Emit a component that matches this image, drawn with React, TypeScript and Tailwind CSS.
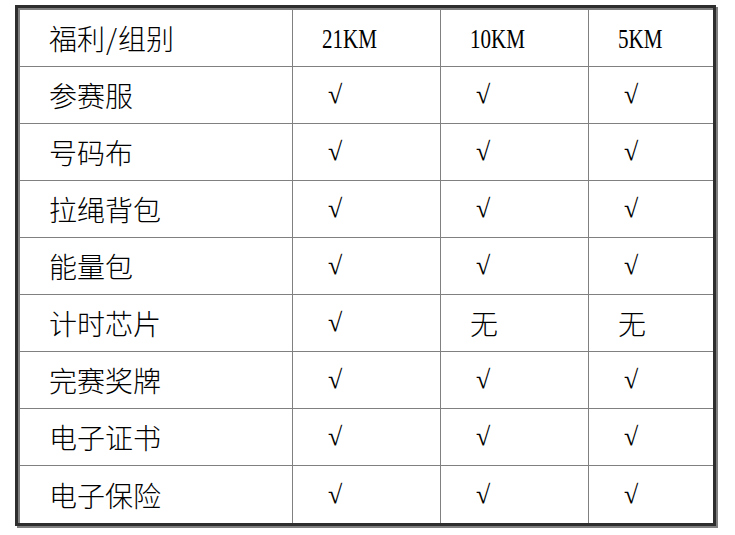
import React from "react";

const rows: [string, string, string, string][] = [
  ["参赛服", "√", "√", "√"],
  ["号码布", "√", "√", "√"],
  ["拉绳背包", "√", "√", "√"],
  ["能量包", "√", "√", "√"],
  ["计时芯片", "√", "无", "无"],
  ["完赛奖牌", "√", "√", "√"],
  ["电子证书", "√", "√", "√"],
  ["电子保险", "√", "√", "√"],
];

const cjk = { fontFamily: '"Noto Sans CJK SC", sans-serif' };
const latin = { fontFamily: '"Liberation Serif", "Noto Sans CJK SC", serif' };

function Cell({ value, last }: { value: string; last?: boolean }) {
  const border = last ? "" : "border-r border-[#808080]";
  if (value === "√") {
    return (
      <div className={`flex items-center pl-[35px] ${border}`}>
        <span className="text-[26px] leading-none text-black" style={latin}>
          √
        </span>
      </div>
    );
  }
  if (value === "福利/组别") {
    return (
      <div className={`flex items-center pl-[29px] ${border}`}>
        <span className="text-[28px] font-light leading-none text-black" style={cjk}>
          福利
        </span>
        <span className="px-[1px] text-[28px] font-light leading-none text-black" style={cjk}>
          /
        </span>
        <span className="text-[28px] font-light leading-none text-black" style={cjk}>
          组别
        </span>
      </div>
    );
  }
  return (
    <div className={`flex items-center pl-[29px] ${border}`}>
      <span className="text-[28px] font-light leading-none text-black" style={cjk}>
        {value}
      </span>
    </div>
  );
}

function Header({ value, last }: { value: string; last?: boolean }) {
  const border = last ? "" : "border-r border-[#808080]";
  return (
    <div className={`flex items-center pl-[29px] pt-[2px] ${border}`}>
      <span
        className="inline-block origin-left scale-x-[0.78] text-[27px] leading-none text-black"
        style={latin}
      >
        {value}
      </span>
    </div>
  );
}

export default function App() {
  return (
    <div className="h-[535px] w-[735px] bg-white pl-[15px] pt-[5px]">
      <div className="flex h-[521px] w-[701px] flex-col border-[3px] border-[#2e2e2e] shadow-[2px_2px_0_#808080]">
        <div className="flex flex-1 flex-col border-l-2 border-t-2 border-[#808080]">
          <div className="grid h-[57px] grid-cols-[273px_148px_148px_1fr] border-b border-[#808080]">
            <Cell value="福利/组别" />
            <Header value="21KM" />
            <Header value="10KM" />
            <Header value="5KM" last />
          </div>
          {rows.map((r, i) => (
            <div
              key={r[0]}
              className={`grid grid-cols-[273px_148px_148px_1fr] ${
                i === rows.length - 1 ? "flex-1" : "h-[57px] border-b border-[#808080]"
              }`}
            >
              <Cell value={r[0]} />
              <Cell value={r[1]} />
              <Cell value={r[2]} />
              <Cell value={r[3]} last />
            </div>
          ))}
        </div>
      </div>
    </div>
  );
}
